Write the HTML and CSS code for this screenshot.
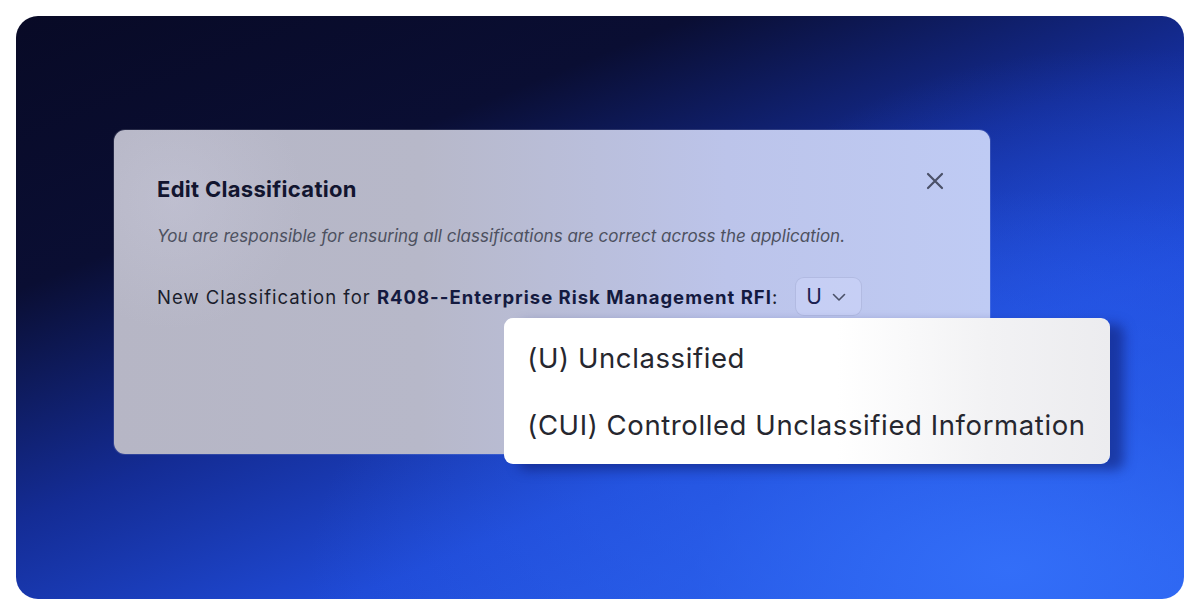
FILE: index.html
```html
<!DOCTYPE html>
<html lang="en">
<head>
<meta charset="utf-8">
<title>Edit Classification</title>
<link rel="stylesheet" href="styles.css">
</head>
<body>
  <div class="frame">
    <section class="dialog">
      <header class="dialog-head">
        <h1 class="title">Edit Classification</h1>
        <button class="close" aria-label="Close">
          <svg width="18" height="18" viewBox="0 0 18 18"><path d="M2 2 L16 16 M16 2 L2 16" stroke="#4b5168" stroke-width="2.2" stroke-linecap="round" fill="none"/></svg>
        </button>
      </header>
      <p class="subtitle">You are responsible for ensuring all classifications are correct across the application.</p>
      <div class="row">
        <span class="label">New Classification for <strong>R408--Enterprise Risk Management RFI</strong>:</span>
        <div class="select">
          <span class="select-value">U</span>
          <svg class="chev" width="14" height="9" viewBox="0 0 14 9"><path d="M1.5 1.5 L7 7 L12.5 1.5" stroke="#4b5168" stroke-width="1.6" fill="none" stroke-linecap="round" stroke-linejoin="round"/></svg>
          <ul class="menu">
            <li class="option">(U) Unclassified</li>
            <li class="option">(CUI) Controlled Unclassified Information</li>
          </ul>
        </div>
      </div>
    </section>
  </div>
</body>
</html>
```
FILE: styles.css
```css
html, body {
  margin: 0;
  padding: 0;
  background: #ffffff;
}
body {
  font-family: Inter, "Noto Sans", "Liberation Sans", sans-serif;
  width: 1200px;
  height: 600px;
  overflow: hidden;
}
.frame {
  margin: 16px 16px 0 16px;
  height: 583px;
  border-radius: 22px;
  padding: 114px 0 0 98px;
  box-sizing: border-box;
  background:
    radial-gradient(ellipse 700px 380px at 85% 95%, rgba(52,112,250,0.9) 0%, rgba(45,100,240,0.5) 45%, rgba(40,90,230,0) 100%),
    radial-gradient(ellipse 420px 260px at 95% 50%, rgba(34,80,225,0.7) 0%, rgba(34,80,225,0) 100%),
    linear-gradient(158deg, #080a26 0%, #0a0e33 26%, #142c95 48%, #1f4ad6 68%, #2a62ee 100%);
}
.dialog {
  width: 876px;
  height: 324px;
  box-sizing: border-box;
  border-radius: 11px;
  padding: 42px 48px 0 43px;
  background:
    radial-gradient(circle 130px at 60px 70px, rgba(205,205,225,0.35), rgba(205,205,225,0) 100%),
    linear-gradient(90deg, #b6b6c5 0%, #b7b8c9 35%, #bcc4ea 70%, #bfcbf4 100%);
  box-shadow: 0 0 0 1px rgba(255,255,255,0.12);
}
.dialog-head {
  display: flex;
  justify-content: space-between;
  align-items: flex-start;
}
.title {
  margin: 3px 0 0 0;
  font-size: 22px;
  line-height: 28px;
  font-weight: 700;
  letter-spacing: 0.3px;
  color: #12152f;
}
.close {
  border: 0;
  background: transparent;
  padding: 0;
  margin: 0 -2px 0 0;
  width: 18px;
  height: 18px;
  display: block;
}
.subtitle {
  margin: 21px 0 0 0;
  font-size: 17px;
  line-height: 24px;
  font-style: italic;
  color: #4d5160;
}
.row {
  display: flex;
  align-items: center;
  gap: 17px;
  margin-top: 29px;
}
.label {
  font-size: 18.5px;
  line-height: 24px;
  color: #1a1d2c;
  letter-spacing: 1px;
}
.label strong {
  font-weight: 700;
  color: #141a40;
}
.select {
  position: relative;
  width: 67px;
  height: 39px;
  box-sizing: border-box;
  border: 1px solid rgba(160,170,210,0.55);
  border-radius: 9px;
  background: rgba(205,214,250,0.55);
  display: flex;
  align-items: center;
  padding-left: 10px;
  gap: 10px;
}
.select-value {
  font-size: 21px;
  line-height: 24px;
  color: #1b2252;
}
.chev {
  display: block;
  margin-top: 1px;
}
.menu {
  position: absolute;
  top: 40px;
  left: -292px;
  width: 606px;
  margin: 0;
  padding: 6px 0;
  list-style: none;
  box-sizing: border-box;
  background: linear-gradient(90deg, #ffffff 0%, #ffffff 55%, #f2f2f4 80%, #ececef 100%);
  border-radius: 9px;
  box-shadow: 14px 6px 12px rgba(14,28,110,0.55);
}
.option {
  height: 67px;
  display: flex;
  align-items: center;
  padding-left: 23px;
  font-size: 27.5px;
  color: #26272f;
  letter-spacing: 0.6px;
}
```
